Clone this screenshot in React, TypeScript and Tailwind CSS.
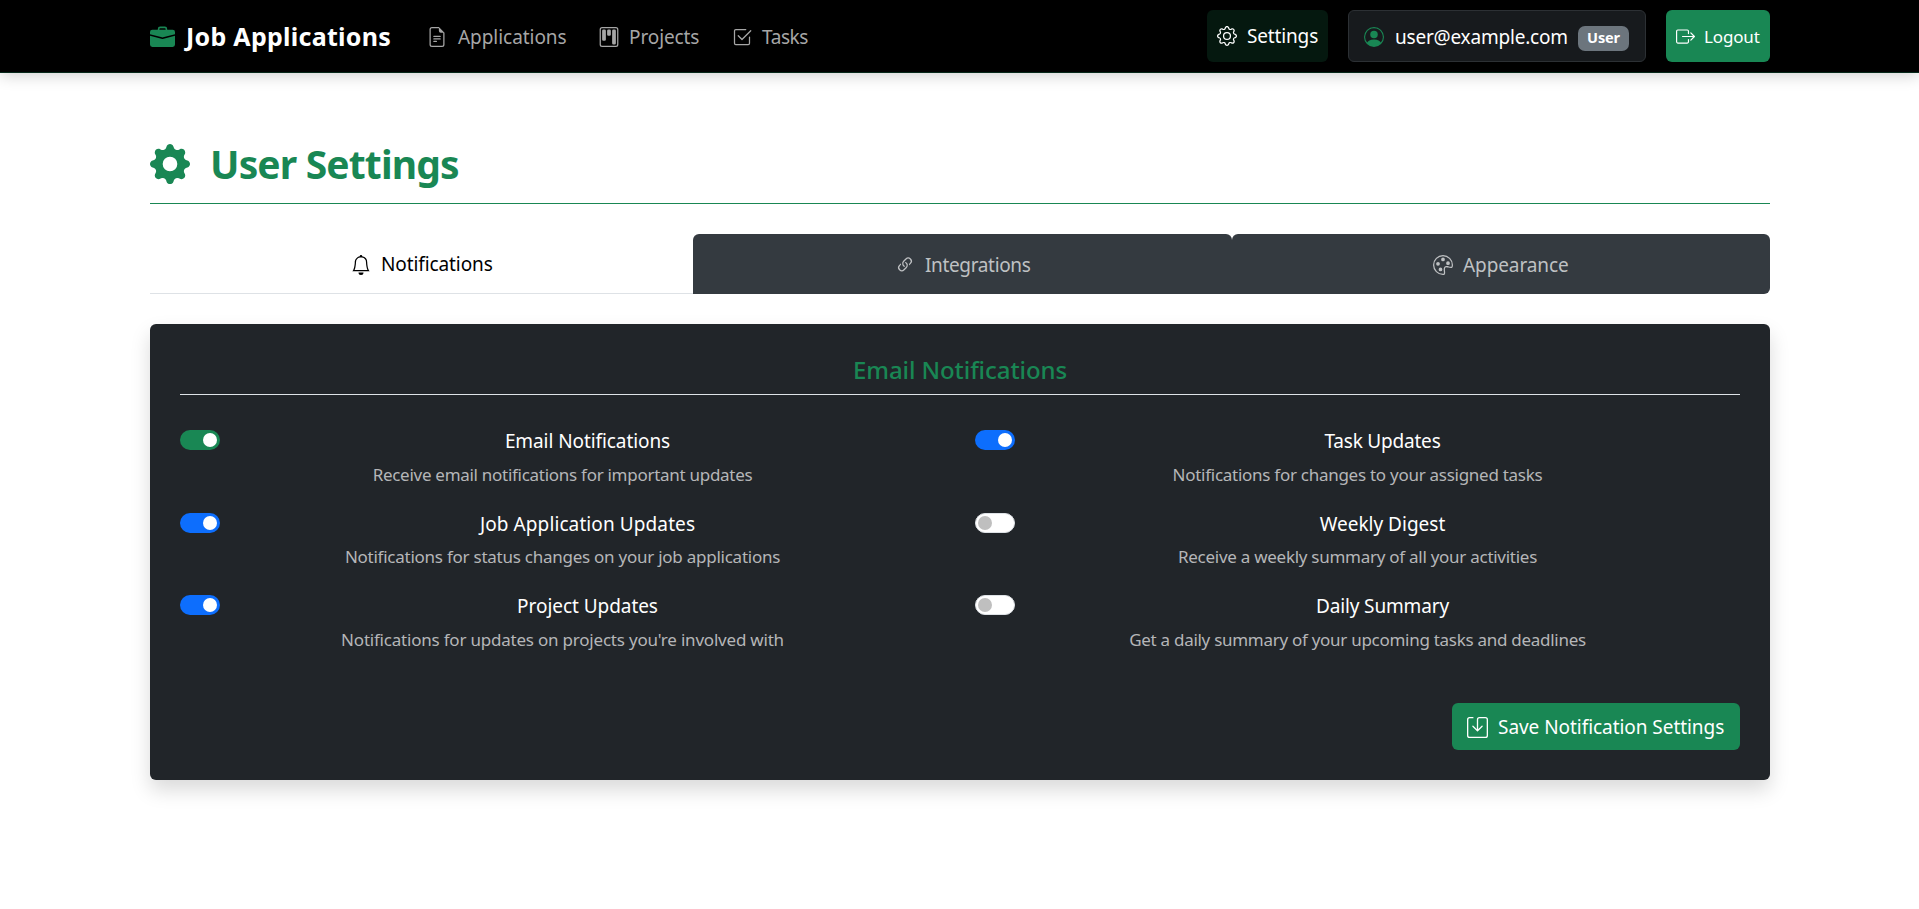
import { BsBell, BsBoxArrowRight, BsBriefcaseFill, BsCheck2Square, BsFileEarmarkText, BsGear, BsGearFill, BsKanban, BsLink45Deg, BsPalette, BsPersonCircle, BsSave } from "react-icons/bs";

function Switch({ on, color }: { on: boolean; color: string }) {
  return (
    <span className={`mt-[1px] flex h-5 w-10 shrink-0 items-center rounded-full ${on ? "justify-end px-[3px] " + color : "justify-start border border-[#dee2e6] bg-white px-[2px]"}`}>
      <span className={`size-[14px] rounded-full ${on ? "bg-white" : "bg-[#bfbfbf]"}`} />
    </span>
  );
}

type Item = { title: string; titleClass: string; text: string; textClass: string; on: boolean; color: string };

const left: Item[] = [
  { title: "Email Notifications", titleClass: "tracking-[-0.08px]", text: "Receive email notifications for important updates", textClass: "tracking-[-0.28px]", on: true, color: "bg-[#198754]" },
  { title: "Job Application Updates", titleClass: "tracking-[0.1px]", text: "Notifications for status changes on your job applications", textClass: "tracking-[-0.25px]", on: true, color: "bg-[#0d6efd]" },
  { title: "Project Updates", titleClass: "tracking-[-0.05px]", text: "Notifications for updates on projects you're involved with", textClass: "tracking-[-0.21px]", on: true, color: "bg-[#0d6efd]" },
];

const right: Item[] = [
  { title: "Task Updates", titleClass: "tracking-[-0.2px]", text: "Notifications for changes to your assigned tasks", textClass: "tracking-[-0.27px]", on: true, color: "bg-[#0d6efd]" },
  { title: "Weekly Digest", titleClass: "tracking-normal", text: "Receive a weekly summary of all your activities", textClass: "tracking-[-0.27px]", on: false, color: "" },
  { title: "Daily Summary", titleClass: "tracking-[-0.15px]", text: "Get a daily summary of your upcoming tasks and deadlines", textClass: "tracking-[-0.28px]", on: false, color: "" },
];

function Column({ items }: { items: Item[] }) {
  return (
    <div className="flex w-[765px] flex-col">
      {items.map((it) => (
        <div key={it.title} className="flex h-[82.5px] flex-col">
          <div className="flex h-[26px] items-start">
            <Switch on={it.on} color={it.color} />
            <span className={`-mt-px grow pl-[10px] text-center leading-[26px] whitespace-nowrap text-white ${it.titleClass}`}>{it.title}</span>
          </div>
          <span className={`mt-[6.5px] text-center text-[17px] leading-[26px] whitespace-nowrap text-[#b5b6b8] ${it.textClass}`}>{it.text}</span>
        </div>
      ))}
    </div>
  );
}

export default function App() {
  return (
    <div className="h-[909px] overflow-hidden bg-white font-['Noto_Sans',sans-serif] text-[19px]">
      <header className="relative flex h-[73px] items-center border-b border-[#06281a] bg-black pr-[149px] pl-[150px] shadow-[0_2px_15px_rgba(0,0,0,0.2)]">
        <div className="flex items-center pt-[2px]">
          <BsBriefcaseFill className="size-[25px] text-[#198754]" />
          <span className="ml-[11px] w-[204px] text-[25px] font-bold tracking-[0.28px] whitespace-nowrap text-white">Job Applications</span>
        </div>
        <nav className="flex pt-[2px] text-[#a6a6a6]">
          <div className="ml-[37px] flex items-center">
            <BsFileEarmarkText className="size-5" />
            <span className="ml-[11px] w-[109px] tracking-[-0.05px] whitespace-nowrap">Applications</span>
          </div>
          <div className="ml-[32px] flex items-center">
            <BsKanban className="size-5" />
            <span className="ml-[10px] w-[71px] tracking-[-0.1px] whitespace-nowrap">Projects</span>
          </div>
          <div className="ml-[32px] flex items-center">
            <BsCheck2Square className="size-5" />
            <span className="ml-[10px] tracking-[-0.4px] whitespace-nowrap">Tasks</span>
          </div>
        </nav>
        <div className="ml-auto flex h-[52px]">
          <div className="flex w-[121px] items-center rounded-md bg-[#05180f] pl-[10px] text-white">
            <BsGear className="size-5" />
            <span className="ml-[10px] tracking-[-0.15px] whitespace-nowrap">Settings</span>
          </div>
          <div className="ml-5 flex w-[298px] items-center rounded-md border border-[#2c3034] bg-[#171a1d] pt-[2px] pl-[15px] text-white">
            <BsPersonCircle className="size-5 text-[#198754]" />
            <span className="ml-[11px] w-[173px] tracking-[-0.2px] whitespace-nowrap">user@example.com</span>
            <span className="mt-[2px] ml-[10px] flex h-[25px] w-[51px] items-center justify-center rounded-[7px] bg-[#6c757d] text-[14.5px] font-bold tracking-[-0.15px]">User</span>
          </div>
          <div className="ml-5 flex w-[104px] items-center rounded-md bg-[#198754] pt-px pl-[10px] text-[17px] text-white">
            <BsBoxArrowRight className="size-[19px]" />
            <span className="ml-[9px] tracking-[-0.15px] whitespace-nowrap">Logout</span>
          </div>
        </div>
      </header>
      <main className="ml-[150px] w-[1620px]">
        <div className="flex h-[131px] items-start border-b border-[#198754] pt-[63px]">
          <BsGearFill className="mt-2 size-10 text-[#198754]" />
          <h1 className="ml-[20px] text-[39px] leading-[56px] font-bold tracking-[-0.85px] whitespace-nowrap text-[#198754]">User Settings</h1>
        </div>
        <div className="mt-[30px] flex h-[60px] text-[#bfc1c3]">
          <div className="flex w-[543px] items-center border-b border-[#dee2e6] pt-[2px] pl-[201px] text-black">
            <BsBell className="size-5" />
            <span className="ml-[10px] tracking-[-0.1px] whitespace-nowrap">Notifications</span>
          </div>
          <div className="flex w-[539px] items-center rounded-t-md bg-[#343a40] pt-[2px] pl-[202px]">
            <BsLink45Deg className="size-5" />
            <span className="ml-[10px] tracking-[-0.35px] whitespace-nowrap">Integrations</span>
          </div>
          <div className="flex w-[538px] items-center rounded-t-md rounded-br-md bg-[#343a40] pt-[2px] pl-[201px]">
            <BsPalette className="size-5" />
            <span className="ml-[10px] tracking-[-0.1px] whitespace-nowrap">Appearance</span>
          </div>
        </div>
        <section className="mt-[30px] h-[456px] rounded-md bg-[#212529] px-[30px] pt-[30px] shadow-[0_10px_20px_rgba(0,0,0,0.15)]">
          <div className="flex h-[41px] justify-center border-b border-[#dee2e6] pt-px">
            <h2 className="text-[24px] leading-[30px] font-medium tracking-[-0.08px] text-[#198754]">Email Notifications</h2>
          </div>
          <div className="flex justify-between pt-[34px]">
            <Column items={left} />
            <Column items={right} />
          </div>
          <div className="mt-[26px] flex justify-end">
            <button className="flex h-[47px] w-[288px] items-center rounded-md bg-[#198754] pt-[2px] pl-[15px] text-white">
              <BsSave className="size-[21px]" />
              <span className="ml-[10px] tracking-[-0.05px] whitespace-nowrap">Save Notification Settings</span>
            </button>
          </div>
        </section>
      </main>
    </div>
  );
}
